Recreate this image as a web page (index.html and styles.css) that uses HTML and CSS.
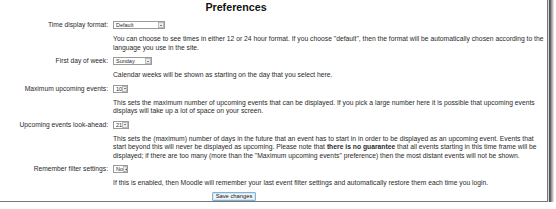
FILE: index.html
```html
<!DOCTYPE html>
<html lang="en">
<head>
  <meta charset="UTF-8">
  <title>Preferences</title>
  <link rel="stylesheet" href="styles.css">
</head>
<body>
  <div class="page">
    <h1 class="title">Preferences</h1>
    <div class="settings">
      <div class="label">Time display format:</div>
      <div class="field"><span class="select w-default">Default<span class="arrow"></span></span></div>
      <div class="desc">You can choose to see times in either 12 or 24 hour format. If you choose "default", then the format will be automatically chosen according to the language you use in the site.</div>

      <div class="label">First day of week:</div>
      <div class="field"><span class="select w-day">Sunday<span class="arrow"></span></span></div>
      <div class="desc">Calendar weeks will be shown as starting on the day that you select here.</div>

      <div class="label">Maximum upcoming events:</div>
      <div class="field"><span class="select w-num">10<span class="arrow"></span></span></div>
      <div class="desc">This sets the maximum number of upcoming events that can be displayed. If you pick a large number here it is possible that upcoming events displays will take up a lot of space on your screen.</div>

      <div class="label">Upcoming events look-ahead:</div>
      <div class="field"><span class="select w-num2">21<span class="arrow"></span></span></div>
      <div class="desc">This sets the (maximum) number of days in the future that an event has to start in in order to be displayed as an upcoming event. Events that start beyond this will never be displayed as upcoming. Please note that <b>there is no guarantee</b> that all events starting in this time frame will be displayed; if there are too many (more than the "Maximum upcoming events" preference) then the most distant events will not be shown.</div>

      <div class="label">Remember filter settings:</div>
      <div class="field"><span class="select w-num">No<span class="arrow"></span></span></div>
      <div class="desc">If this is enabled, then Moodle will remember your last event filter settings and automatically restore them each time you login.</div>
    </div>
    <div class="actions">
      <button class="save">Save changes</button>
    </div>
  </div>
</body>
</html>
```

FILE: styles.css
```css
body {
  margin: 0;
  background: #fff;
  font-family: "Liberation Sans", Arial, sans-serif;
  color: #2a2a2a;
}

.page {
  width: 548px;
  height: 202px;
  background: #fff;
  border-right: 1px solid #777;
  border-bottom: 1px solid #777;
  box-sizing: border-box;
  overflow: hidden;
  box-shadow: 0 0 0 1px #d8d8d8, 0 0 0 2px #555, 0 0 0 3px #666, 0 0 0 4px #999, 0 0 0 5px #bbb, 0 0 0 6px #e0e0e0;
}

.title {
  width: 472px;
  margin: 0;
  padding-top: 1px;
  text-align: center;
  font-size: 10.7px;
  line-height: 13px;
  font-weight: bold;
  color: #111;
}

.settings {
  display: grid;
  grid-template-columns: 108px 1fr;
  column-gap: 5px;
  margin-top: 5px;
  font-size: 6.7px;
}

.label {
  text-align: right;
  height: 12px;
  line-height: 12px;
}

.field {
  height: 12px;
  display: flex;
  align-items: center;
}

.desc {
  grid-column: 2;
  width: 432px;
  font-size: 6.75px;
  line-height: 8.5px;
  margin: 4px 0 3px;
}

.select {
  display: inline-flex;
  align-items: center;
  justify-content: space-between;
  height: 8px;
  box-sizing: border-box;
  border: 1px solid #9a9a9a;
  padding-left: 2px;
  font-size: 5.5px;
  background: #fff;
}

.w-default { width: 52px; }
.w-day { width: 39px; }
.w-num { width: 15px; }
.w-num2 { width: 16px; }

.arrow {
  width: 6px;
  height: 6px;
  box-sizing: border-box;
  border: 1px solid #bbb;
  background: #eee;
  position: relative;
}

.arrow::after {
  content: "";
  position: absolute;
  left: 1px;
  top: 1.5px;
  border-left: 1.5px solid transparent;
  border-right: 1.5px solid transparent;
  border-top: 1.5px solid #111;
}

.actions {
  width: 468px;
  display: flex;
  justify-content: center;
  margin-top: 1px;
}

.save {
  font-family: "Liberation Sans", Arial, sans-serif;
  font-size: 5.8px;
  height: 9px;
  padding: 0 3px;
  line-height: 7px;
  border: 1px solid #7fb4d8;
  border-radius: 1px;
  background: #f4f4f4;
  box-shadow: inset 0 0 0 1px #cfe6f5;
  color: #111;
}
```
